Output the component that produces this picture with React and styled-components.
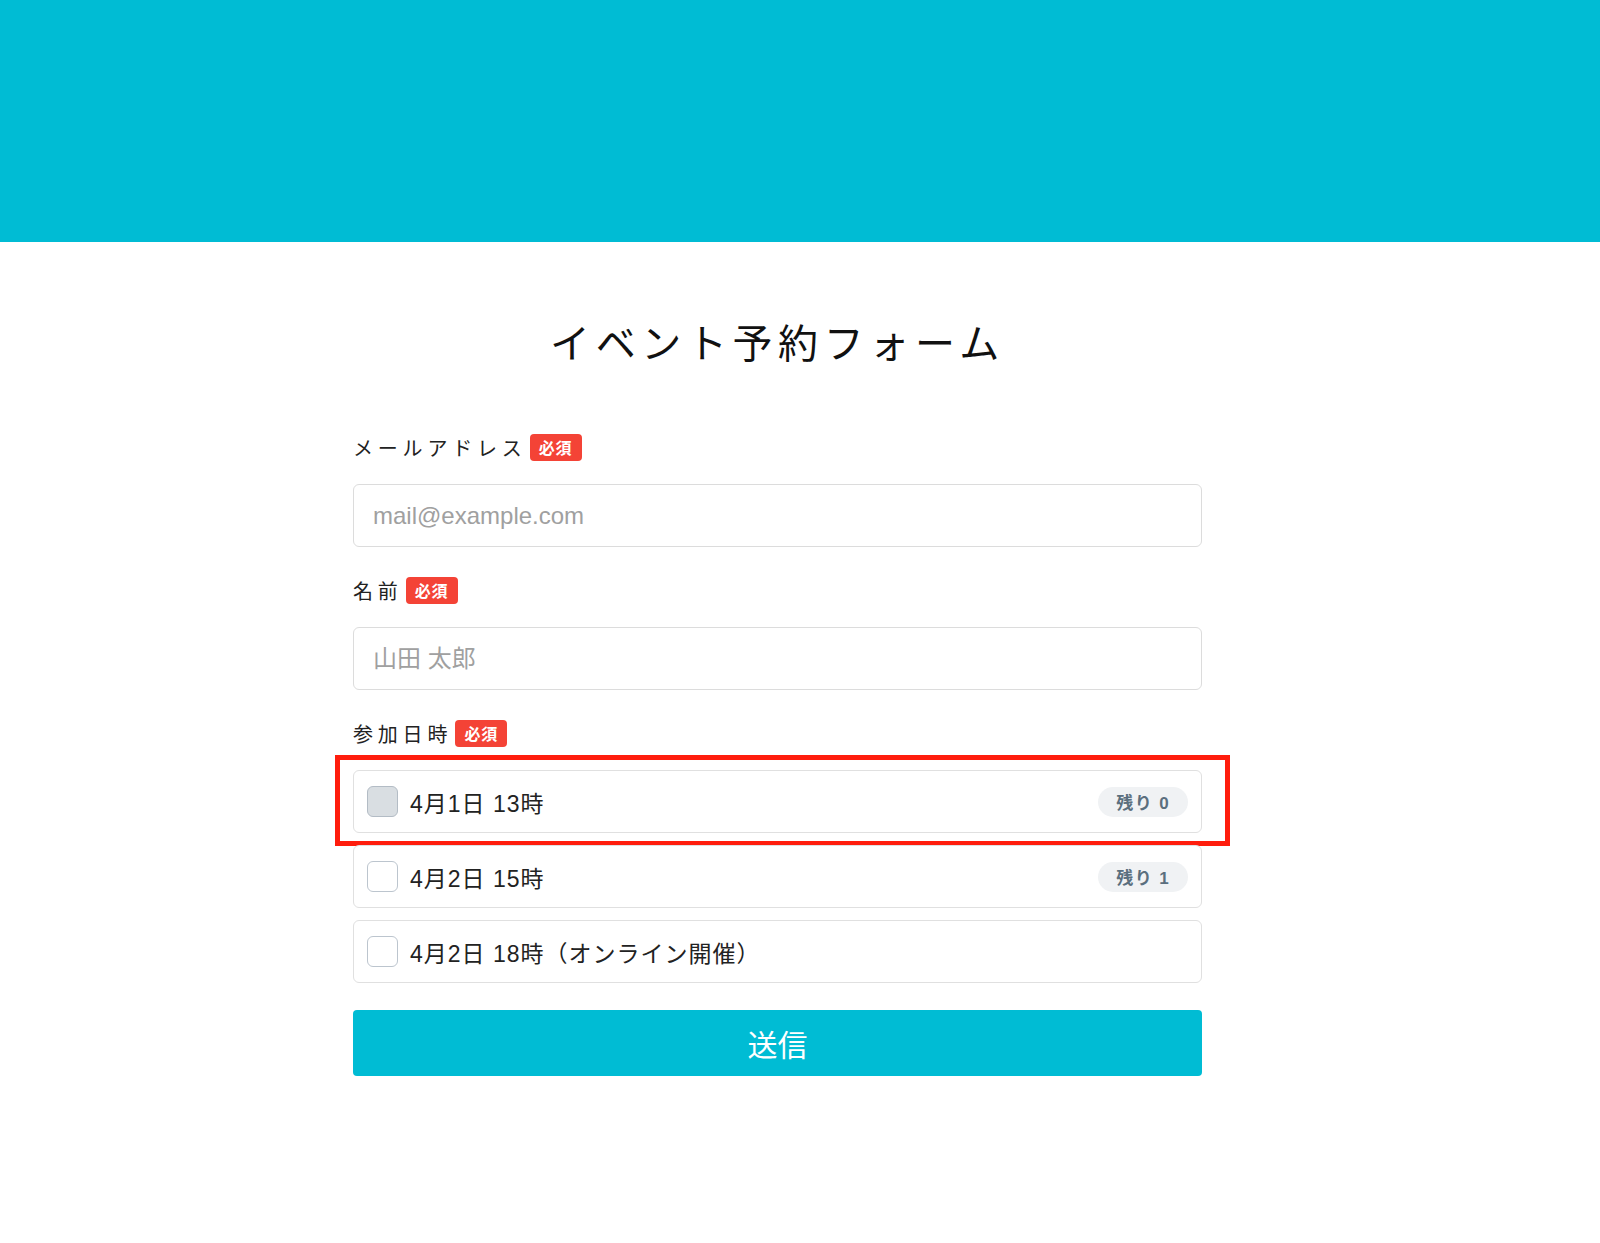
import React from "react";
import styled, { createGlobalStyle } from "styled-components";

const GlobalStyle = createGlobalStyle`
  body {
    margin: 0;
    background: #ffffff;
    font-family: "Liberation Sans", "Noto Sans CJK JP", sans-serif;
    color: #222;
  }
`;

const Header = styled.header`
  height: 242px;
  background: #00bcd4;
`;

const Page = styled.main`
  padding-right: 45px;
`;

const Container = styled.div`
  width: 849px;
  margin: 0 auto;
`;

const Title = styled.h1`
  margin: 72px 0 58px;
  font-size: 40px;
  line-height: 60px;
  font-weight: 400;
  letter-spacing: 0.14em;
  text-align: center;
  color: #111;
`;

const Field = styled.div`
  margin-bottom: 28px;
`;

const Label = styled.div`
  display: flex;
  align-items: center;
  height: 30px;
  margin-bottom: 22px;
  font-size: 20px;
  letter-spacing: 0.24em;
  color: #222;
`;

const Required = styled.span`
  display: inline-flex;
  align-items: center;
  justify-content: center;
  width: 52px;
  height: 27px;
  margin-left: 3px;
  border-radius: 4px;
  background: #f44336;
  color: #fff;
  font-size: 16px;
  font-weight: 700;
  letter-spacing: 0.05em;
`;

const Input = styled.input`
  display: block;
  box-sizing: border-box;
  width: 100%;
  height: 63px;
  padding: 0 19px;
  border: 1px solid #dcdcdc;
  border-radius: 6px;
  font-family: inherit;
  font-size: 24px;
  color: #222;
  outline: none;

  &::placeholder {
    color: #a0a0a0;
  }
`;

const Options = styled.div`
  display: flex;
  flex-direction: column;
  gap: 12px;
  margin-bottom: 27px;
`;

const Option = styled.label`
  position: relative;
  display: flex;
  align-items: center;
  box-sizing: border-box;
  height: 63px;
  padding: 0 13px;
  border: 1px solid #e0e0e0;
  border-radius: 6px;
  cursor: pointer;
`;

const Box = styled.span`
  box-sizing: border-box;
  width: 31px;
  height: 31px;
  border-radius: 6px;
  border: 1px solid ${p => (p.disabled ? "#b3bcc5" : "#bcc5ce")};
  background: ${p => (p.disabled ? "#d9dee2" : "#fff")};
  flex-shrink: 0;
`;

const OptionText = styled.span`
  margin-left: 12px;
  font-size: 23px;
  letter-spacing: 1px;
  color: #222;
  flex: 1;
`;

const Remain = styled.span`
  display: inline-flex;
  align-items: center;
  height: 30px;
  padding: 0 18px;
  border-radius: 15px;
  background: #f0f2f4;
  color: #5b6f7e;
  font-size: 17px;
  font-weight: 700;
  letter-spacing: 0.08em;
`;

const Highlight = styled.span`
  position: absolute;
  left: -19px;
  top: -16px;
  right: -29px;
  bottom: -14px;
  border: 5px solid #ff1d0d;
  pointer-events: none;
`;

const Submit = styled.button`
  display: block;
  width: 100%;
  height: 66px;
  border: none;
  border-radius: 4px;
  background: #00bcd4;
  color: #fff;
  font-family: inherit;
  font-size: 30px;
  cursor: pointer;
`;

const dates = [
  { label: "4月1日 13時", remain: 0, highlight: true },
  { label: "4月2日 15時", remain: 1 },
  { label: "4月2日 18時（オンライン開催）" }
];

export default function App() {
  return (
    <>
      <GlobalStyle />
      <Header />
      <Page>
        <Container>
          <Title>イベント予約フォーム</Title>

          <Field>
            <Label>
              メールアドレス<Required>必須</Required>
            </Label>
            <Input type="email" placeholder="mail@example.com" />
          </Field>

          <Field>
            <Label>
              名前<Required>必須</Required>
            </Label>
            <Input type="text" placeholder="山田 太郎" />
          </Field>

          <Label>
            参加日時<Required>必須</Required>
          </Label>
          <Options>
            {dates.map(d => (
              <Option key={d.label}>
                <Box disabled={d.remain === 0} />
                <OptionText>{d.label}</OptionText>
                {d.remain !== undefined && <Remain>残り {d.remain}</Remain>}
                {d.highlight && <Highlight />}
              </Option>
            ))}
          </Options>

          <Submit>送信</Submit>
        </Container>
      </Page>
    </>
  );
}
